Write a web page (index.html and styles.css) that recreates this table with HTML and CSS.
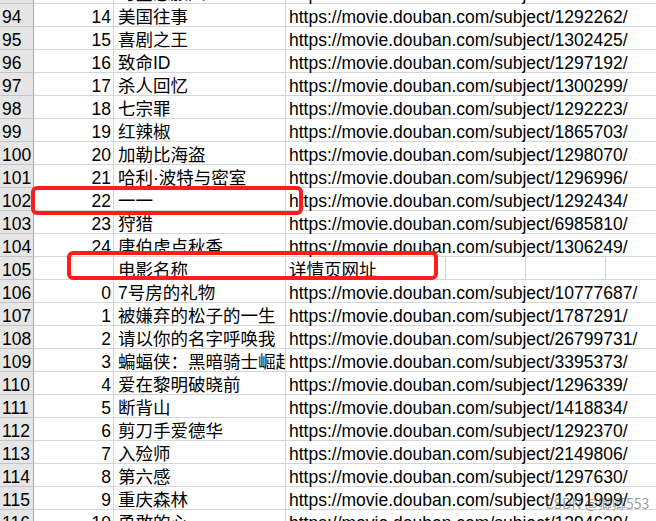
FILE: index.html
```html
<!DOCTYPE html>
<html lang="zh">
<head>
  <meta charset="UTF-8">
  <title>豆瓣电影 - 表格</title>
  <link rel="stylesheet" href="styles.css">
</head>
<body>
<div class="sheet">
  <div class="row"><div class="rh">93</div><div class="num">13</div><div class="title">时空恋旅人</div><div class="url">https://movie.douban.com/subject/10577869/</div></div>
  <div class="row"><div class="rh">94</div><div class="num">14</div><div class="title">美国往事</div><div class="url">https://movie.douban.com/subject/1292262/</div></div>
  <div class="row"><div class="rh">95</div><div class="num">15</div><div class="title">喜剧之王</div><div class="url">https://movie.douban.com/subject/1302425/</div></div>
  <div class="row"><div class="rh">96</div><div class="num">16</div><div class="title">致命ID</div><div class="url">https://movie.douban.com/subject/1297192/</div></div>
  <div class="row"><div class="rh">97</div><div class="num">17</div><div class="title">杀人回忆</div><div class="url">https://movie.douban.com/subject/1300299/</div></div>
  <div class="row"><div class="rh">98</div><div class="num">18</div><div class="title">七宗罪</div><div class="url">https://movie.douban.com/subject/1292223/</div></div>
  <div class="row"><div class="rh">99</div><div class="num">19</div><div class="title">红辣椒</div><div class="url">https://movie.douban.com/subject/1865703/</div></div>
  <div class="row"><div class="rh">100</div><div class="num">20</div><div class="title">加勒比海盗</div><div class="url">https://movie.douban.com/subject/1298070/</div></div>
  <div class="row"><div class="rh">101</div><div class="num">21</div><div class="title">哈利·波特与密室</div><div class="url">https://movie.douban.com/subject/1296996/</div></div>
  <div class="row"><div class="rh">102</div><div class="num">22</div><div class="title">一一</div><div class="url">https://movie.douban.com/subject/1292434/</div></div>
  <div class="row"><div class="rh">103</div><div class="num">23</div><div class="title">狩猎</div><div class="url">https://movie.douban.com/subject/6985810/</div></div>
  <div class="row"><div class="rh">104</div><div class="num">24</div><div class="title">唐伯虎点秋香</div><div class="url">https://movie.douban.com/subject/1306249/</div></div>
  <div class="row"><div class="rh">105</div><div class="num"></div><div class="title">电影名称</div><div class="cell">详情页网址</div><div class="cell"></div><div class="cell"></div><div class="cell"></div></div>
  <div class="row"><div class="rh">106</div><div class="num">0</div><div class="title">7号房的礼物</div><div class="url">https://movie.douban.com/subject/10777687/</div></div>
  <div class="row"><div class="rh">107</div><div class="num">1</div><div class="title">被嫌弃的松子的一生</div><div class="url">https://movie.douban.com/subject/1787291/</div></div>
  <div class="row"><div class="rh">108</div><div class="num">2</div><div class="title">请以你的名字呼唤我</div><div class="url">https://movie.douban.com/subject/26799731/</div></div>
  <div class="row"><div class="rh">109</div><div class="num">3</div><div class="title">蝙蝠侠：黑暗骑士崛起</div><div class="url">https://movie.douban.com/subject/3395373/</div></div>
  <div class="row"><div class="rh">110</div><div class="num">4</div><div class="title">爱在黎明破晓前</div><div class="url">https://movie.douban.com/subject/1296339/</div></div>
  <div class="row"><div class="rh">111</div><div class="num">5</div><div class="title">断背山</div><div class="url">https://movie.douban.com/subject/1418834/</div></div>
  <div class="row"><div class="rh">112</div><div class="num">6</div><div class="title">剪刀手爱德华</div><div class="url">https://movie.douban.com/subject/1292370/</div></div>
  <div class="row"><div class="rh">113</div><div class="num">7</div><div class="title">入殓师</div><div class="url">https://movie.douban.com/subject/2149806/</div></div>
  <div class="row"><div class="rh">114</div><div class="num">8</div><div class="title">第六感</div><div class="url">https://movie.douban.com/subject/1297630/</div></div>
  <div class="row"><div class="rh">115</div><div class="num">9</div><div class="title">重庆森林</div><div class="url">https://movie.douban.com/subject/1291999/</div></div>
  <div class="row"><div class="rh">116</div><div class="num">10</div><div class="title">勇敢的心</div><div class="url">https://movie.douban.com/subject/1294639/</div></div>
</div>

<!-- red annotation boxes drawn over the sheet -->
<div class="mark mark-row"></div>
<div class="mark mark-head"></div>

<div class="watermark">CSDN @卿卿553</div>
</body>
</html>
```

FILE: styles.css
```css
* {
  margin: 0;
  padding: 0;
  box-sizing: border-box;
}

body {
  width: 656px;
  height: 521px;
  overflow: hidden;
  background: #ffffff;
  position: relative;
  font-family: "Liberation Sans", "Noto Sans CJK SC", sans-serif;
  font-size: 17.5px;
  color: #000000;
}

/* Spreadsheet grid */
.sheet {
  margin-top: -19px;
  width: 686px;
}

.row {
  display: grid;
  grid-template-columns: 34px 80px 172px 160px 80px 80px 80px;
  height: 23px;
}

.row > div {
  height: 23px;
  padding-top: 3px;
  line-height: 20px;
  border-bottom: 1px solid #d6d6d6;
  white-space: nowrap;
}

.rh {
  background: #e6e6e6;
  border-right: 1px solid #a6a6a6;
  border-bottom-color: #c4c4c4 !important;
  padding-left: 2px;
}

.num {
  text-align: right;
  padding-right: 2px;
  border-right: 1px solid #d6d6d6;
}

.title {
  padding-left: 4px;
  overflow: hidden;
  border-right: 1px solid #d6d6d6;
}

.url {
  grid-column: 4 / -1;
  padding-left: 3px;
}

.cell {
  padding-left: 3px;
  border-right: 1px solid #d6d6d6;
}

/* Annotation boxes */
.mark {
  position: absolute;
  border: 4px solid #ff1c1c;
  border-radius: 6px;
}

.mark-row {
  left: 31px;
  top: 186px;
  width: 272px;
  height: 29px;
}

.mark-head {
  left: 67px;
  top: 251px;
  width: 371px;
  height: 29px;
}

.watermark {
  position: absolute;
  left: 545px;
  top: 493px;
  font-family: "Noto Sans CJK SC", sans-serif;
  font-size: 14px;
  line-height: 20px;
  color: rgba(90, 90, 90, 0.6);
}
```
